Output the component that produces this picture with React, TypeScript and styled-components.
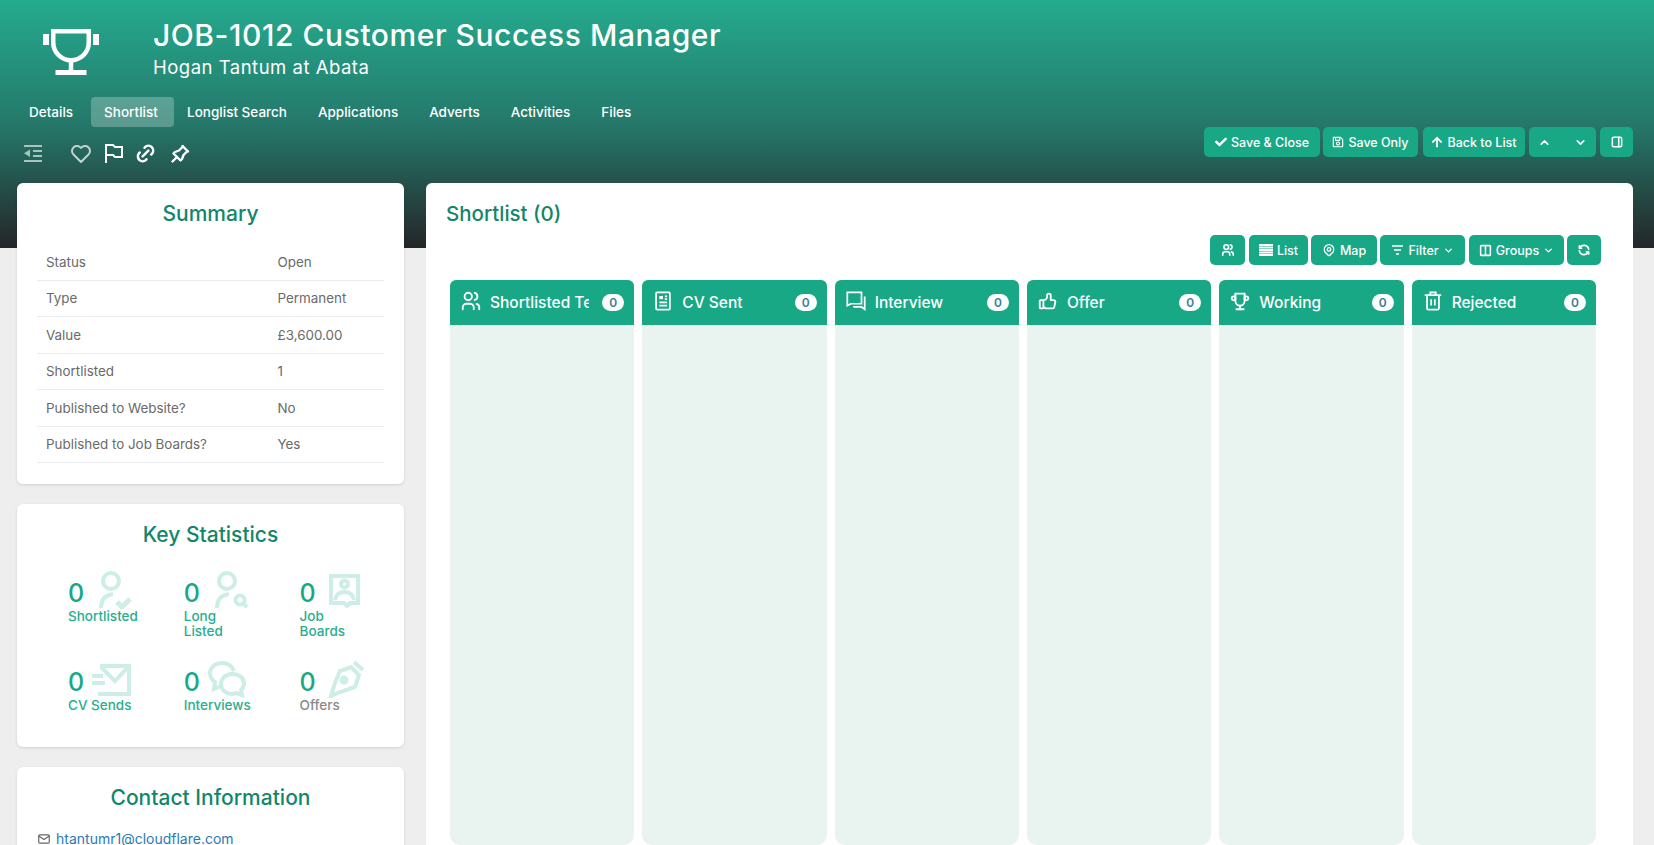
import React from 'react';
import styled, {createGlobalStyle} from 'styled-components';
import {
    TbUsers, TbThumbUp, TbTrophy, TbMapPin, TbRefresh, TbHeart, TbPin, TbLink, TbMail,
    TbChevronUp, TbChevronDown, TbLayoutSidebarRight, TbColumns2,
} from 'react-icons/tb';
import {FaCheck, FaArrowUp, FaRegSave} from 'react-icons/fa';

const green = '#19a886';
const darkGreen = '#12866c';
const font = '"Inter", "Noto Sans", sans-serif';

const GlobalStyle = createGlobalStyle`
  html, body {
    margin: 0;
    height: 845px;
    overflow: hidden;
    background: #eeeeee;
    font-family: ${font};
  }
  * { box-sizing: border-box; }
`;

const summaryRows = [
    ['Status', 'Open'],
    ['Type', 'Permanent'],
    ['Value', '£3,600.00'],
    ['Shortlisted', '1'],
    ['Published to Website?', 'No'],
    ['Published to Job Boards?', 'Yes'],
];

const TrophyLogo = () => (
    <svg width="56" height="46" viewBox="0 0 56 46" fill="none" stroke="#fff" strokeWidth="4.5">
        <path d="M8 2.250h40M10.250 2.250v11c0 11 8.750 18 17.750 18s17.750-7 17.750-18v-11"/>
        <path d="M28 31v11"/>
        <path d="M12.500 43.500h31" strokeWidth="5"/>
        <path d="M0 5h6v11H0zM50 5h6v11h-6z" fill="#fff" stroke="none"/>
    </svg>
);

const OutdentIcon = () => (
    <svg width="20" height="17" viewBox="0 0 20 17" fill="none" stroke="#a9c4bc" strokeWidth="2">
        <path d="M1 1h18M10 6h9M10 11h9M1 16h18"/>
        <path d="M7 4.500v7.500L1 8.250z" fill="#a9c4bc" stroke="none"/>
    </svg>
);

const FlagIcon = () => (
    <svg width="19" height="19" viewBox="0 0 19 19" fill="none" stroke="#fff" strokeWidth="2">
        <path d="M2 19V1h7l2 2h7v10h-7l-2-2H2"/>
    </svg>
);

const StackIcon = () => (
    <svg width="14" height="12" viewBox="0 0 14 12" fill="#fff">
        <path d="M0 0h14v2H0zM0 2.500h14v2H0zM0 5h14v2H0zM0 7.500h14v2H0zM0 10h14v2H0z"/>
    </svg>
);

const FilterIcon = () => (
    <svg width="13" height="10" viewBox="0 0 13 10" fill="none" stroke="#fff" strokeWidth="1.300">
        <path d="M1 1h11M3 5h7M5 9h3"/>
    </svg>
);

const ColumnSvg = ({children}: { children: React.ReactNode }) => (
    <svg width="22" height="22" viewBox="0 0 24 24" fill="none" stroke="currentColor" strokeWidth="1.900">{children}</svg>
);

const statStroke = {fill: 'none', stroke: '#cdeee6', strokeWidth: 4};

const StatSvg = ({children}: { children: React.ReactNode }) => (
    <svg width="40" height="38" viewBox="0 0 40 38" {...statStroke}>{children}</svg>
);

const statIcons: Record<string, React.ReactNode> = {
    check: <StatSvg>
        <circle cx="19" cy="10" r="8"/>
        <path d="M9 37c0-8 4-13 12-14"/>
        <path d="M25 31l5 5 8-8" strokeWidth="5"/>
    </StatSvg>,
    search: <StatSvg>
        <circle cx="19" cy="10" r="8"/>
        <path d="M9 37c0-8 4-13 12-14"/>
        <circle cx="32" cy="29" r="4.500"/>
        <path d="M35 32l4 4"/>
    </StatSvg>,
    board: <StatSvg>
        <path d="M7 5h27v27h-8l-3 3-3-3H7z"/>
        <circle cx="20.500" cy="13" r="3.500"/>
        <path d="M11 29c1-6 5-8 9.500-8s8.500 2 9.500 8"/>
    </StatSvg>,
    mail: <StatSvg>
        <path d="M8 6h29v28H6"/>
        <path d="M9 7l14 14L36 7"/>
        <path d="M0 16h11M0 23h13"/>
    </StatSvg>,
    chat: <StatSvg>
        <path d="M13 26l-7 3 1-7c-3-2-5-5-5-9 0-6 6-10 12-10 6 0 10 3 12 8"/>
        <path d="M24 14c7 0 12 4 12 9 0 3-1 5-3 7l1 5-6-2c-1 .5-3 1-4 1-7 0-11-5-11-10s4-10 11-10z"/>
    </StatSvg>,
    pen: <StatSvg>
        <path d="M30 2l9 8"/>
        <path d="M27 7l8 8-4 12-15 5-9 4 4-13 5-12z"/>
        <circle cx="20" cy="20" r="2.500" fill="#cdeee6"/>
    </StatSvg>,
};

type Stat = { label: React.ReactNode, icon: string, muted?: boolean };

const stats: Stat[] = [
    {label: 'Shortlisted', icon: 'check'},
    {label: <>Long<br/>Listed</>, icon: 'search'},
    {label: <>Job<br/>Boards</>, icon: 'board'},
    {label: 'CV Sends', icon: 'mail'},
    {label: 'Interviews', icon: 'chat'},
    {label: 'Offers', icon: 'pen', muted: true},
];

const columns = [
    {name: 'Shortlisted Team', icon: <TbUsers/>},
    {
        name: 'CV Sent', icon: <ColumnSvg>
            <rect x="4.500" y="2.500" width="15" height="19" rx="1"/>
            <path d="M8 6.500h4v3.500H8z" fill="currentColor" stroke="none"/>
            <path d="M14 7h2.500M14 10h2.500M8 13.500h8.500M8 17h8.500"/>
        </ColumnSvg>
    },
    {
        name: 'Interview', icon: <ColumnSvg>
            <path d="M2.500 2.500h15.500v12.500H6.500l-4 2z"/>
            <path d="M21.500 7v14l-3.500-2.500H9"/>
        </ColumnSvg>
    },
    {name: 'Offer', icon: <TbThumbUp/>},
    {name: 'Working', icon: <TbTrophy/>},
    {
        name: 'Rejected', icon: <ColumnSvg>
            <path d="M3 5.500h18M9 5.500V2.500h6v3M5.500 5.500V20a1.500 1.500 0 0 0 1.500 1.500h10a1.500 1.500 0 0 0 1.500-1.500V5.500"/>
            <path d="M10 10v7M14 10v7"/>
        </ColumnSvg>
    },
];

const tabs = ['Details', 'Shortlist', 'Longlist Search', 'Applications', 'Adverts', 'Activities', 'Files'];

export default function App() {
    return (
        <>
            <GlobalStyle/>
            <Header>
                <TitleRow>
                    <LogoBox><TrophyLogo/></LogoBox>
                    <div>
                        <JobTitle>JOB-1012 Customer Success Manager</JobTitle>
                        <JobSubtitle>Hogan Tantum at Abata</JobSubtitle>
                    </div>
                </TitleRow>
                <Tabs>
                    {tabs.map(t => <Tab key={t} $active={t === 'Shortlist'}>{t}</Tab>)}
                </Tabs>
                <HeaderBar>
                    <QuickIcons>
                        <OutdentIcon/>
                        <IconGroup>
                            <TbHeart color="#c2d3ce" size={24}/>
                            <FlagIcon/>
                            <TbLink color="#fff" size={23} strokeWidth={2.600}/>
                            <TbPin color="#fff" size={24} strokeWidth={2.400}/>
                        </IconGroup>
                    </QuickIcons>
                    <HeaderActions>
                        <Button $w={116}><FaCheck size={12}/>Save &amp; Close</Button>
                        <Button $w={95}><FaRegSave size={12}/>Save Only</Button>
                        <Button $w={102} $ml={2}><FaArrowUp size={12}/>Back to List</Button>
                        <Button $w={67} $ml={1} $between><TbChevronUp size={13} strokeWidth={3}/><TbChevronDown size={13} strokeWidth={3}/></Button>
                        <Button $w={33} $ml={1}><TbLayoutSidebarRight size={14} strokeWidth={2.600}/></Button>
                    </HeaderActions>
                </HeaderBar>
            </Header>
            <Content>
                <Sidebar>
                    <Card $h={301}>
                        <CardTitle>Summary</CardTitle>
                        <SummaryTable>
                            {summaryRows.map(([k, v]) => (
                                <SummaryRow key={k}>
                                    <SummaryKey>{k}</SummaryKey>
                                    <SummaryValue>{v}</SummaryValue>
                                </SummaryRow>
                            ))}
                        </SummaryTable>
                    </Card>
                    <Card $h={243}>
                        <CardTitle>Key Statistics</CardTitle>
                        <StatsGrid>
                            {stats.map((s, i) => (
                                <StatCell key={i}>
                                    <StatTop>
                                        <StatNumber>0</StatNumber>
                                        {statIcons[s.icon]}
                                    </StatTop>
                                    <StatLabel $muted={s.muted}>{s.label}</StatLabel>
                                </StatCell>
                            ))}
                        </StatsGrid>
                    </Card>
                    <Card $h={200}>
                        <CardTitle>Contact Information</CardTitle>
                        <ContactLine>
                            <TbMail size={14} color="#666"/>
                            <ContactLink>htantumr1@cloudflare.com</ContactLink>
                        </ContactLine>
                    </Card>
                </Sidebar>
                <MainCard>
                    <MainTitle>Shortlist (0)</MainTitle>
                    <Toolbar>
                        <Button $w={35}><TbUsers size={14} strokeWidth={2.800}/></Button>
                        <Button $w={59} $ml={1}><StackIcon/>List</Button>
                        <Button $w={66}><TbMapPin size={14} strokeWidth={2.400}/>Map</Button>
                        <Button $w={85}><FilterIcon/>Filter<TbChevronDown size={11} strokeWidth={3}/></Button>
                        <Button $w={95} $ml={1}><TbColumns2 size={13} strokeWidth={2.800}/>Groups<TbChevronDown size={11} strokeWidth={3}/></Button>
                        <Button $w={34}><TbRefresh size={14} strokeWidth={2.800}/></Button>
                    </Toolbar>
                    <Board>
                        {columns.map(c => (
                            <Column key={c.name}>
                                <ColumnHeader>
                                    <ColumnIcon>{c.icon}</ColumnIcon>
                                    <ColumnName>{c.name}</ColumnName>
                                    <Badge>0</Badge>
                                </ColumnHeader>
                                <ColumnBody/>
                            </Column>
                        ))}
                    </Board>
                </MainCard>
            </Content>
        </>
    );
}

const Header = styled.header`
  height: 248px;
  padding: 0 21px 0 16px;
  background: linear-gradient(180deg, #24ab8e 0%, #25786a 50%, #242628 100%);
  color: #fff;
`;

const TitleRow = styled.div`
  display: flex;
  height: 97px;
  padding-top: 15px;
`;

const LogoBox = styled.div`
  width: 137px;
  padding: 14px 0 0 27px;
`;

const JobTitle = styled.h1`
  margin: 0;
  font-size: 30px;
  line-height: 40px;
  font-weight: 500;
  letter-spacing: 0.55px;
`;

const JobSubtitle = styled.div`
  font-size: 18.5px;
  line-height: 24px;
  letter-spacing: 0.5px;
`;

const Tabs = styled.nav`
  display: flex;
  gap: 5px;
  height: 30px;
`;

const Tab = styled.a<{ $active?: boolean }>`
  display: flex;
  align-items: center;
  padding: 0 13px;
  border-radius: 4px;
  font-size: 13.5px;
  font-weight: 500;
  ${p => p.$active && `
    width: 83px;
    margin-right: -5px;
    background: rgba(255, 255, 255, 0.25);
  `}
`;

const HeaderBar = styled.div`
  display: flex;
  justify-content: space-between;
`;

const QuickIcons = styled.div`
  display: flex;
  align-items: center;
  gap: 26px;
  height: 19px;
  margin-top: 17px;
  padding-left: 7px;
`;

const IconGroup = styled.div`
  display: flex;
  align-items: center;
  gap: 11px;
`;

const HeaderActions = styled.div`
  display: flex;
  gap: 3px;
`;

const Button = styled.button<{ $ml?: number, $w: number, $between?: boolean }>`
  display: flex;
  align-items: center;
  justify-content: ${p => (p.$between ? 'space-around' : 'center')};
  gap: 4px;
  height: 30px;
  width: ${p => p.$w}px;
  margin-left: ${p => p.$ml || 0}px;
  padding: 0;
  border: none;
  border-radius: 5px;
  background: ${green};
  color: #fff;
  font-family: ${font};
  font-size: 12.5px;
  font-weight: 500;
  white-space: nowrap;
`;

const Content = styled.main`
  display: flex;
  align-items: flex-start;
  gap: 22px;
  margin-top: -65px;
  padding: 0 21px 0 17px;
`;

const Sidebar = styled.aside`
  display: flex;
  flex-direction: column;
  gap: 20px;
  width: 387px;
  flex-shrink: 0;
`;

const Card = styled.section<{ $h: number }>`
  height: ${p => p.$h}px;
  padding: 0 20px;
  background: #fff;
  border-radius: 6px;
  box-shadow: 0 1px 3px rgba(0, 0, 0, 0.12);
`;

const CardTitle = styled.h2`
  margin: 0;
  padding-top: 17px;
  font-size: 21px;
  line-height: 28px;
  font-weight: 500;
  text-align: center;
  color: ${darkGreen};
`;

const SummaryTable = styled.div`
  margin-top: 16px;
`;

const SummaryRow = styled.div`
  display: flex;
  align-items: center;
  height: 36.5px;
  padding-left: 9px;
  border-bottom: 1px solid #e9ecef;
  font-size: 13.4px;
  color: #6a6a6a;
`;

const SummaryKey = styled.div`
  width: 231.5px;
`;

const SummaryValue = styled.div``;

const StatsGrid = styled.div`
  display: grid;
  grid-template-columns: repeat(3, 115.8px);
  grid-auto-rows: 88.5px;
  margin-top: 22px;
  padding-left: 31px;
`;

const StatCell = styled.div``;

const StatTop = styled.div`
  display: flex;
  align-items: center;
  height: 38px;
`;

const StatNumber = styled.div`
  width: 24px;
  padding-top: 6px;
  font-size: 25px;
  font-weight: 500;
  color: ${green};
`;

const StatLabel = styled.div<{ $muted?: boolean }>`
  font-size: 13.5px;
  line-height: 15px;
  font-weight: 500;
  color: ${p => (p.$muted ? '#8a8a8a' : '#28ad8e')};
`;

const ContactLine = styled.div`
  display: flex;
  align-items: center;
  gap: 5px;
  margin-top: 18px;
`;

const ContactLink = styled.a`
  font-size: 14px;
  color: #2c7ab0;
`;

const MainCard = styled.section`
  flex: 1;
  height: 700px;
  background: #fff;
  border-radius: 6px;
  padding-top: 17px;
`;

const MainTitle = styled.h2`
  margin: 0 0 0 20px;
  font-size: 20.5px;
  line-height: 28px;
  font-weight: 500;
  color: ${darkGreen};
`;

const Toolbar = styled.div`
  display: flex;
  justify-content: flex-end;
  gap: 3px;
  margin-top: 7px;
  padding-right: 32px;
`;

const Board = styled.div`
  display: flex;
  gap: 8px;
  margin-top: 15px;
  padding: 0 37px 0 24px;
`;

const Column = styled.div`
  flex: 1;
  display: flex;
  flex-direction: column;
  height: 565px;
  min-width: 0;
`;

const ColumnHeader = styled.div`
  display: flex;
  align-items: center;
  height: 45px;
  padding: 0 10px;
  border-radius: 6px 6px 0 0;
  background: ${green};
  color: #fff;
`;

const ColumnIcon = styled.span`
  display: flex;
  width: 30px;
  font-size: 22px;
  margin-top: -4px;
`;

const ColumnName = styled.span`
  flex: 0 1 99px;
  overflow: hidden;
  white-space: nowrap;
  font-size: 15.5px;
  font-weight: 500;
`;

const Badge = styled.span`
  display: flex;
  align-items: center;
  justify-content: center;
  width: 22px;
  height: 17px;
  margin-left: auto;
  border-radius: 9px;
  background: #fff;
  color: #3b7f8f;
  font-size: 12px;
  font-weight: 600;
`;

const ColumnBody = styled.div`
  flex: 1;
  border-radius: 0 0 10px 10px;
  background: #e9f4f1;
`;
